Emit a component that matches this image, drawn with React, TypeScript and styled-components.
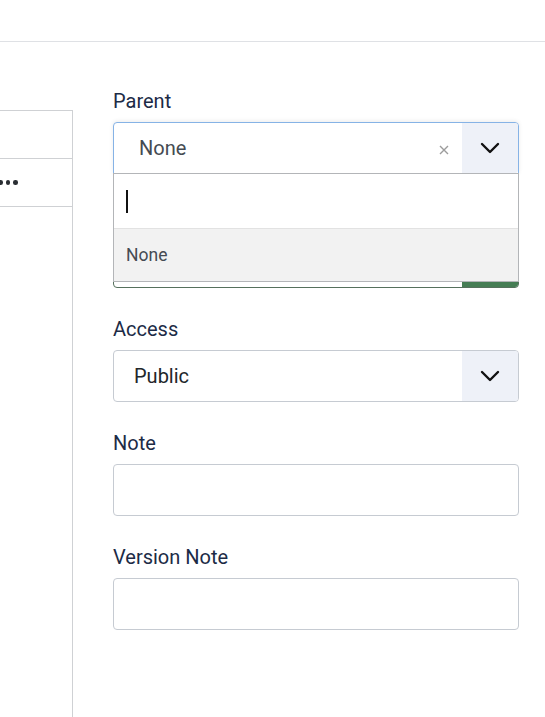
import styled, { createGlobalStyle } from 'styled-components';

const GlobalStyle = createGlobalStyle`
   html, body {
      margin: 0;
      padding: 0;
      background: #ffffff;
      font-family: Roboto, 'Noto Sans', Arial, sans-serif;
      overflow: hidden;
   }
   * {
      box-sizing: border-box;
   }
`;

const Header = styled.header`
   height: 42px;
   border-bottom: 1px solid #dfe1e5;
   background: #ffffff;
`;

const Main = styled.div`
   display: flex;
   align-items: flex-start;
`;

const SidePanel = styled.div`
   width: 73px;
   min-height: 640px;
   margin-top: 68px;
   border-top: 1px solid #cfd1d4;
   border-right: 1px solid #cfd1d4;
`;

const PanelRow = styled.div`
   height: 48px;
   display: flex;
   align-items: center;
   gap: 3px;
   margin-left: -2px;
   border-bottom: 1px solid #cfd1d4;
`;

const Dot = styled.span`
   width: 4.5px;
   height: 4.5px;
   border-radius: 50%;
   background: #2a2e33;
`;

const FormColumn = styled.div`
   width: 406px;
   margin-left: 40px;
   padding-top: 44px;
`;

const Field = styled.div<{ $raised?: boolean }>`
   position: relative;
   z-index: ${({ $raised }) => ($raised ? 5 : 1)};
   margin-bottom: 26px;
`;

const Label = styled.div`
   height: 30px;
   font-size: 20px;
   line-height: 30px;
   color: #1c2b46;
   margin-bottom: 6px;
`;

const SelectBox = styled.div<{ $state?: 'focus' | 'success' }>`
   position: relative;
   height: 52px;
   display: flex;
   align-items: center;
   background: #ffffff;
   border: 1px solid
      ${({ $state }) => ($state === 'focus' ? '#86b3e6' : $state === 'success' ? '#55705c' : '#c6cbd2')};
   border-radius: ${({ $state }) => ($state === 'focus' ? '4px 4px 0 0' : '4px')};
   box-shadow: ${({ $state }) => ($state === 'focus' ? '0 -1px 4px rgba(0, 0, 0, 0.08)' : 'none')};
`;

const SelectValue = styled.span<{ $pad: number; $muted?: boolean }>`
   flex: 1;
   padding-left: ${({ $pad }) => $pad}px;
   font-size: 20px;
   color: ${({ $muted }) => ($muted ? '#454b52' : '#22262a')};
`;

const ClearButton = styled.span`
   display: flex;
   align-items: center;
   justify-content: center;
   width: 22px;
   margin-right: 7px;
   margin-top: 4px;
`;

const ArrowCell = styled.span<{ $success?: boolean }>`
   align-self: stretch;
   width: 56px;
   display: flex;
   align-items: center;
   justify-content: center;
   background: ${({ $success }) => ($success ? '#457d54' : '#eef1f8')};
   border-radius: 0 3px 3px 0;
`;

const Dropdown = styled.div`
   position: absolute;
   left: -1px;
   right: -1px;
   top: 100%;
   z-index: 5;
   background: #ffffff;
   border: 1px solid #b3b5b8;
`;

const SearchRow = styled.div`
   height: 55px;
   display: flex;
   align-items: center;
   padding-left: 12px;
   border-bottom: 1px solid #e2e2e2;
`;

const Caret = styled.span`
   width: 1.5px;
   height: 23px;
   background: #111111;
`;

const Option = styled.div`
   height: 52px;
   display: flex;
   align-items: center;
   padding-left: 12px;
   font-size: 17.5px;
   color: #454b52;
   background: #f2f2f2;
`;

const TextInput = styled.div`
   height: 52px;
   border: 1px solid #c6cbd2;
   border-radius: 4px;
   background: #ffffff;
`;

const Chevron = ({ color = '#111' }: { color?: string }) => (
   <svg width="20" height="12" viewBox="0 0 20 12">
      <path d="M2 2 L10 10 L18 2" fill="none" stroke={color} strokeWidth="2.4" strokeLinecap="round" strokeLinejoin="round" />
   </svg>
);

const Cross = () => (
   <svg width="10" height="10" viewBox="0 0 10 10">
      <path d="M1 1 L9 9 M9 1 L1 9" stroke="#9c9c9c" strokeWidth="1.4" />
   </svg>
);

const App = () => {
   return (
      <>
         <GlobalStyle />
         <Header />
         <Main>
            <SidePanel>
               <PanelRow />
               <PanelRow>
                  <Dot />
                  <Dot />
                  <Dot />
               </PanelRow>
            </SidePanel>
            <FormColumn>
               <Field $raised>
                  <Label>Parent</Label>
                  <SelectBox $state="focus">
                     <SelectValue $pad={25} $muted>
                        None
                     </SelectValue>
                     <ClearButton>
                        <Cross />
                     </ClearButton>
                     <ArrowCell>
                        <Chevron />
                     </ArrowCell>
                     <Dropdown>
                        <SearchRow>
                           <Caret />
                        </SearchRow>
                        <Option>None</Option>
                     </Dropdown>
                  </SelectBox>
               </Field>
               {/* status field, hidden behind the open dropdown */}
               <Field>
                  <Label />
                  <SelectBox $state="success">
                     <SelectValue $pad={20} />
                     <ArrowCell $success>
                        <Chevron color="#ffffff" />
                     </ArrowCell>
                  </SelectBox>
               </Field>
               <Field>
                  <Label>Access</Label>
                  <SelectBox>
                     <SelectValue $pad={20}>Public</SelectValue>
                     <ArrowCell>
                        <Chevron />
                     </ArrowCell>
                  </SelectBox>
               </Field>
               <Field>
                  <Label>Note</Label>
                  <TextInput />
               </Field>
               <Field>
                  <Label>Version Note</Label>
                  <TextInput />
               </Field>
            </FormColumn>
         </Main>
      </>
   );
};

export default App;
